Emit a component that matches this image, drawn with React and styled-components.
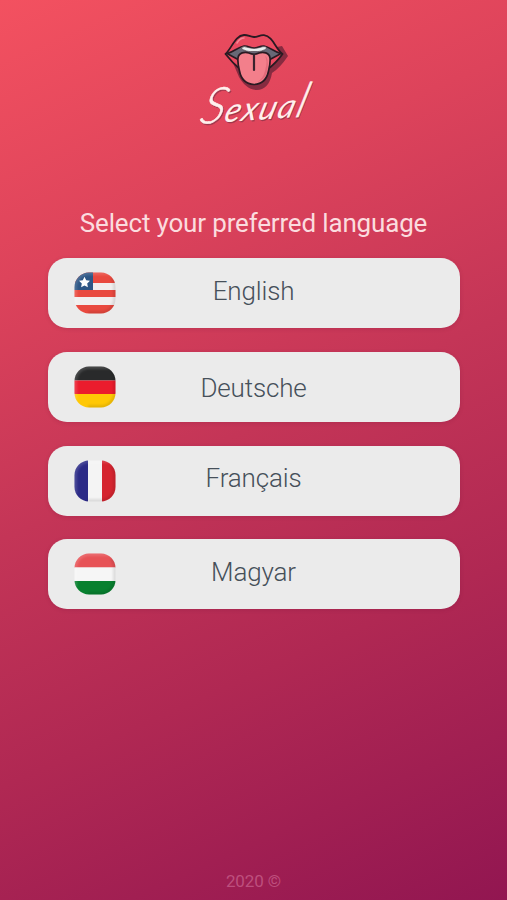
import React from 'react';
import styled, { createGlobalStyle } from 'styled-components';

const GlobalStyle = createGlobalStyle`
  * { box-sizing: border-box; }
  body { margin: 0; font-family: Roboto, "Liberation Sans", sans-serif; }
`;

const Screen = styled.main`
  display: flex;
  flex-direction: column;
  align-items: center;
  width: 507px;
  height: 900px;
  overflow: hidden;
  background: linear-gradient(156deg, #f35160 0%, #dd435b 25%, #c43557 48%, #b02853 70%, #921651 100%);
`;

const Brand = styled.header`
  width: 130px;
  height: 106px;
  margin-top: 28px;
  svg { display: block; overflow: visible; }
`;

const Wordmark = styled.text`
  font-family: Lato, sans-serif;
  font-style: italic;
  font-weight: 400;
  font-size: 33px;
`;

const Letter = styled.tspan`
  font-size: ${(p) => p.$size}px;
  font-weight: 300;
  stroke: currentColor;
  stroke-width: 0.5px;
`;

const Heading = styled.h1`
  margin: 73px 0 0;
  height: 32px;
  font-size: 26px;
  line-height: 32px;
  font-weight: 400;
  letter-spacing: -0.17px;
  color: #fbdcdf;
  white-space: nowrap;
  text-align: center;
`;

const LanguageList = styled.div`
  display: flex;
  flex-direction: column;
  gap: 23.7px;
  width: 412px;
  margin-top: 19.2px;
`;

const LanguageButton = styled.button`
  display: grid;
  grid-template-columns: 42px 1fr 42px;
  align-items: start;
  height: 70px;
  padding: 14px 26px;
  border: 0;
  border-radius: 19px;
  background: #ebebeb;
  box-shadow: 0 1px 4px rgba(90, 10, 50, 0.16);
  font-family: inherit;
  color: #46505a;
`;

const Label = styled.span`
  margin-top: ${(p) => p.$top}px;
  font-size: 26px;
  line-height: 30px;
  font-weight: 300;
  letter-spacing: -0.15px;
  text-align: center;
`;

const FlagIcon = styled.svg`
  display: block;
  width: 42px;
  height: 42px;
`;

const Footer = styled.footer`
  margin-top: auto;
  height: 29px;
  font-size: 17px;
  line-height: 20px;
  font-weight: 400;
  letter-spacing: -0.1px;
  color: #bd4f7d;
`;

const shape = 'M15 .5H27C35 .5 41.5 7 41.5 15V27C41.5 35 35 41.5 27 41.5H15C7 41.5 .5 35 .5 27V15C.5 7 7 .5 15 .5Z';

const artwork = {
  us: (
    <>
      <path fill="#f1eeee" d="M0 0h42v42H0z" />
      <path fill="#e9493f" d="M0 0h42v11H0zM0 18h42v7H0zM0 33h42v9H0z" />
      <path fill="#2d5685" d="M0 0h19v18H0z" />
      <path fill="#fff" d="m10.5 4.8 1.7 3.5 3.8.5-2.8 2.7.7 3.8-3.4-1.8-3.4 1.8.7-3.8L5 8.800l3.800-.5Z" />
    </>
  ),
  de: (
    <>
      <path fill="#292a2b" d="M0 0h42v14.500H0z" />
      <path fill="#eb1c2d" d="M0 14.500h42V28H0z" />
      <path fill="#ffc805" d="M0 28h42v14H0z" />
    </>
  ),
  fr: (
    <>
      <path fill="#2b2a86" d="M0 0h14v42H0z" />
      <path fill="#f4f4f4" d="M14 0h14v42H14z" />
      <path fill="#d5242f" d="M28 0h14v42H28z" />
    </>
  ),
  hu: (
    <>
      <path fill="#e75256" d="M0 0h42v14.500H0z" />
      <path fill="#f6f6f6" d="M0 14.500h42V28H0z" />
      <path fill="#08802f" d="M0 28h42v14H0z" />
    </>
  ),
};

function Flag({ code }) {
  return (
    <FlagIcon viewBox="0 0 42 42" aria-hidden="true">
      <defs>
        <clipPath id={`clip-${code}`}><path d={shape} /></clipPath>
        <filter id={`soft-${code}`} x="-10%" y="-10%" width="120%" height="120%"><feGaussianBlur stdDeviation=".9" /></filter>
      </defs>
      <g clipPath={`url(#clip-${code})`}>
        {artwork[code]}
        <g fill="none" strokeWidth="5" filter={`url(#soft-${code})`}>
          <path d="M.5 34V15C.5 7 7 .5 15 .5H36" stroke="#fff" strokeOpacity=".14" />
          <path d="M38 5Q41.500 9 41.500 15V27C41.500 35 35 41.500 27 41.500H14" stroke="#000" strokeOpacity=".1" />
        </g>
      </g>
    </FlagIcon>
  );
}

function Lettering() {
  return (
    <>
      <Letter $size={49}>S</Letter>
      <tspan dx="-1">exua</tspan>
      <Letter $size={47}>l</Letter>
    </>
  );
}

function Logo() {
  return (
    <svg width="130" height="106" viewBox="189 28 130 106" role="img" aria-label="Sexual">
      <path fill="#872b40" d="M230 56 282 46 288 56Q280 68 272 73C270 85 264 90 257 90C249 90 243 84 239 77Z" />
      <path d="M225.500 54C232 48 235 35.500 244 35C248 34.700 250 37 254 37C258 37 260 34.700 264 35.200C273 36.500 275 48 282.500 54C277 62 272 66 267 70H241C236 66 231 61 225.500 54Z" fill="#e94a60" stroke="#291a22" strokeWidth="1.800" strokeLinejoin="round" />
      <path d="M227 53.500C234 52 238 47 244 46C248 45.500 250 48 254 48C258 48 260 45.500 264 46C270 47 274 52 281 53.500L269 60H239Z" fill="#686876" stroke="#291a22" strokeWidth="1.600" strokeLinejoin="round" />
      <path d="M241 48Q244 45.500 248 47.500Q254 49.500 260 47.500Q265 45.500 267 48C264 51 259 52 254 51.500C249 52 244 51 241 48Z" fill="#e8eeee" stroke="#45343e" strokeWidth=".6" />
      <path d="M238 58C238.500 52.500 245 51.500 249 53Q254 55.500 259 53C263 51.500 269.500 52.500 270 58C270.500 62 269.500 67 268.500 71C267 79 262 84 254 84.500C246 84 241 79 239.500 71C238.500 67 237.500 62 238 58Z" fill="#f37f8b" stroke="#291a22" strokeWidth="1.700" />
      <path d="M265 56Q268 60 265 71Q263 79 257 82C264 80 266.500 76 267.500 69Q269 58 265 56Z" fill="#d95d70" opacity=".6" />
      <path d="M254 54.500V70" stroke="#39222d" strokeWidth="2.200" strokeLinecap="round" />
      <path d="M237 43Q240 38 244 38" stroke="#f58796" strokeWidth="1.500" fill="none" strokeLinecap="round" />
      <g transform="translate(198 124) rotate(-4) skewX(-20)">
        <Wordmark x="1.300" y="1.300" fill="#7d3045" color="#7d3045" opacity=".65" textLength="106" aria-hidden="true"><Lettering /></Wordmark>
        <Wordmark x="0" y="0" fill="#fff0ed" color="#fff0ed" textLength="106"><Lettering /></Wordmark>
      </g>
    </svg>
  );
}

const languages = [
  { code: 'us', name: 'English', top: 3.5 },
  { code: 'de', name: 'Deutsche', top: 7 },
  { code: 'fr', name: 'Français', top: 3.5 },
  { code: 'hu', name: 'Magyar', top: 3.5 },
];

export default function App() {
  return (
    <>
      <GlobalStyle />
      <Screen>
        <Brand><Logo /></Brand>
        <Heading>Select your preferred language</Heading>
        <LanguageList>
          {languages.map(({ code, name, top }) => (
            <LanguageButton key={code} type="button">
              <Flag code={code} />
              <Label $top={top}>{name}</Label>
            </LanguageButton>
          ))}
        </LanguageList>
        <Footer>2020 ©</Footer>
      </Screen>
    </>
  );
}
